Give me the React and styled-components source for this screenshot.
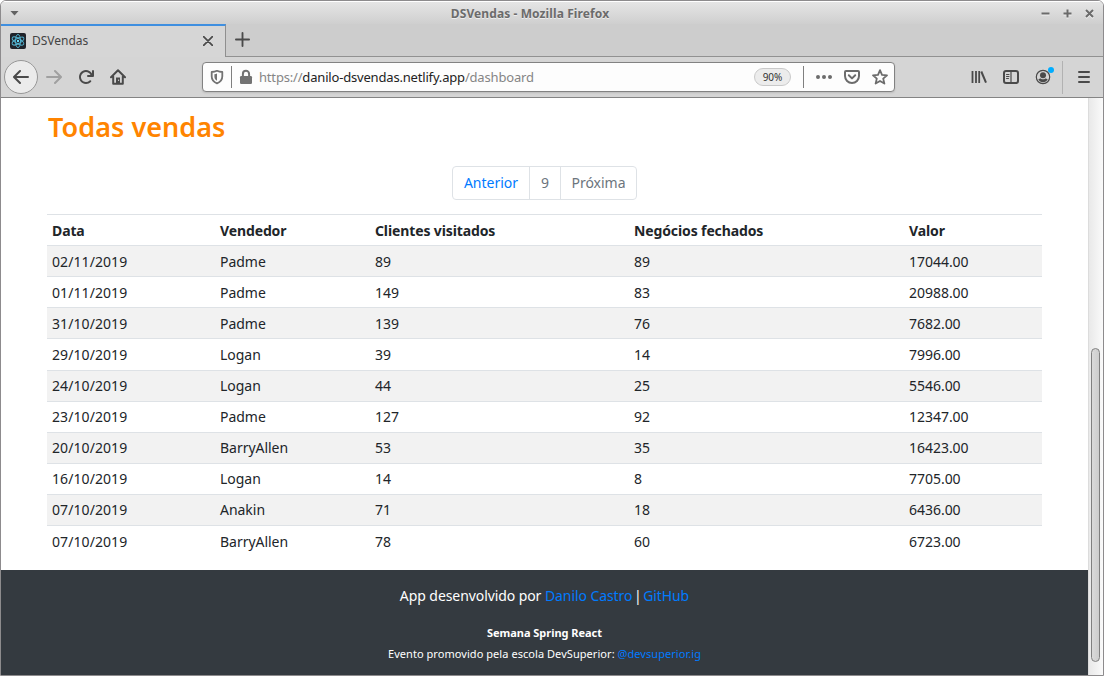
import React from "react";
import styled, { createGlobalStyle } from "styled-components";

const Global = createGlobalStyle`
  * { box-sizing: border-box; }
  body { margin: 0; background: #fff; overflow: hidden; }
`;

const Window = styled.div`
  width: 1104px;
  height: 676px;
  display: flex;
  flex-direction: column;
  border: 1px solid #8d8b8d;
  border-radius: 6px 6px 0 0;
  overflow: hidden;
  background: #fff;
  font-family: "Noto Sans", "Open Sans", sans-serif;
`;

/* ---------- Window frame ---------- */

const TitleBar = styled.header`
  flex: none;
  height: 23px;
  display: grid;
  grid-template-columns: 16px 1fr 60px;
  align-items: center;
  padding: 0 9px;
  border-top: 1px solid #fff;
  background: linear-gradient(#e5e5e5, #cfcfcf);
`;

const WindowMenu = styled.span`
  width: 9px;
  height: 5px;
  background: #626262;
  clip-path: polygon(0 0, 100% 0, 50% 100%);
`;

const WindowTitle = styled.h1`
  margin: 2px 0 0;
  text-align: center;
  font-size: 12px;
  line-height: 18px;
  font-weight: 700;
  letter-spacing: 0.1px;
  color: #6b6b6b;
  text-shadow: 0 1px 0 #eee;
`;

const WindowButtons = styled.div`
  display: flex;
  justify-content: flex-end;
  gap: 13px;
  padding-top: 1px;

  svg {
    width: 9px;
    height: 9px;
    stroke: #6b6b6b;
    stroke-width: 2;
    fill: none;
    filter: drop-shadow(0 1px 0 #f2f2f2);
  }
`;

const TabStrip = styled.div`
  flex: none;
  height: 33px;
  display: flex;
  background: #cdcdcd;
`;

const Tab = styled.div`
  width: 225px;
  display: flex;
  align-items: center;
  padding: 0 12px 1px 9px;
  border-top: 2px solid #3f8fe0;
  border-right: 1px solid #8f8f8f;
  background: #d6d6d6;
`;

const TabTitle = styled.span`
  flex: 1;
  padding-left: 6px;
  font-size: 12px;
  line-height: 18px;
  color: #444;
`;

const StripRest = styled.div`
  flex: 1;
  padding: 8px 0 0 9px;
  border-bottom: 1px solid #919191;
`;

const NavBar = styled.nav`
  flex: none;
  height: 41px;
  display: flex;
  align-items: center;
  padding: 0 11px 0 3px;
  border-bottom: 1px solid #848484;
  background: #d5d5d5;
`;

const BackButton = styled.span`
  width: 34px;
  height: 34px;
  display: grid;
  place-items: center;
  border: 1px solid #979797;
  border-radius: 50%;
  background: #ebebeb;
`;

const NavIcons = styled.div`
  width: 164px;
  display: flex;
  gap: 16px;
  padding-left: 8px;
`;

const UrlBar = styled.div`
  width: 693px;
  height: 30px;
  display: flex;
  align-items: center;
  padding: 0 6px;
  border: 1px solid #828282;
  border-radius: 4px;
  background: #fdfdfd;
  box-shadow: 0 1px 2px rgba(0, 0, 0, 0.12);
`;

const Divider = styled.span`
  flex: none;
  width: 1px;
  height: ${(p) => p.$height || 22}px;
  background: ${(p) => p.$color || "#7f7f7f"};
`;

const UrlText = styled.span`
  flex: 1;
  font-size: 13px;
  line-height: 20px;
  letter-spacing: -0.18px;
  color: #858585;

  strong { font-weight: 400; color: #222; }
`;

const ZoomBadge = styled.span`
  width: 37px;
  height: 18px;
  margin-right: 12px;
  border: 1px solid #c9c9c9;
  border-radius: 9px;
  background: #ececec;
  font-size: 10px;
  line-height: 16px;
  text-align: center;
  color: #333;
`;

const ShieldSlot = styled.span`
  display: flex;
  padding-right: 6px;
`;

const LockSlot = styled.span`
  display: flex;
  padding: 0 5px 0 6px;
`;

const UrlActions = styled.div`
  display: flex;
  gap: 12px;
  padding-left: 12px;
`;

const ToolIcons = styled.div`
  flex: 1;
  display: flex;
  align-items: center;
  justify-content: flex-end;
`;

const ToolSlot = styled.span`
  position: relative;
  display: flex;
  margin-right: ${(p) => p.$gap}px;
`;

const Notice = styled.i`
  position: absolute;
  top: -2px;
  left: 13px;
  width: 6px;
  height: 6px;
  border-radius: 50%;
  background: #00adff;
`;

const Icon = styled.svg.attrs({ viewBox: "0 0 16 16" })`
  display: block;
  width: ${(p) => p.$size || 16}px;
  height: ${(p) => p.$size || 16}px;
  fill: none;
  stroke: ${(p) => p.$color || "#4a4a4a"};
  stroke-width: 2;
  stroke-linecap: round;
  stroke-linejoin: round;
`;

const MenuIcon = styled(Icon)`
  margin-left: 13px;
`;

/* ---------- Page ---------- */

const Viewport = styled.div`
  flex: 1;
  display: flex;
  min-height: 0;
`;

const Page = styled.div`
  width: 1087px;
  display: flex;
  flex-direction: column;
`;

const Scrollbar = styled.div`
  flex: 1;
  padding: 250px 2px 0 2px;
  border-left: 1px solid #dcdcdc;
  background: linear-gradient(90deg, #e9e9e9, #fafafa);
`;

const Thumb = styled.div`
  width: 9px;
  height: 314px;
  border: 1px solid #808080;
  border-radius: 5px;
  background: linear-gradient(90deg, #dadada, #cdcdcd);
`;

const Main = styled.main`
  height: 472px;
  padding: 12px 46px 0;
`;

const Heading = styled.h2`
  margin: 0;
  padding-left: 1px;
  font-size: 27px;
  font-weight: 600;
  line-height: 34px;
  letter-spacing: 0.04px;
  color: #ff8400;
`;

const Pagination = styled.div`
  display: flex;
  width: 185px;
  height: 34px;
  margin: 22px auto 14px;
  border: 1px solid #dee2e6;
  border-radius: 4px;
`;

const PageItem = styled.span`
  width: ${(p) => p.$width}px;
  border-left: ${(p) => (p.$first ? "0" : "1px solid #dee2e6")};
  text-align: center;
  font-size: 14px;
  line-height: 32px;
  color: ${(p) => (p.$first ? "#007bff" : "#6c757d")};
`;

const Table = styled.div`
  display: flex;
  flex-direction: column;
`;

const Row = styled.div`
  display: grid;
  grid-template-columns: 168px 155px 259px 275px 1fr;
  height: ${(p) => (p.$tall ? 32 : 31)}px;
  padding-left: 5px;
  border-top: 1px solid #dee2e6;
  background: ${(p) => (p.$striped ? "#f2f2f2" : "#fff")};
  font-size: 14px;
  font-weight: ${(p) => (p.$head ? 700 : 400)};
  letter-spacing: ${(p) => (p.$head ? "-0.12px" : "-0.03px")};
  line-height: ${(p) => (p.$tight ? 29 : 31)}px;
  color: #212529;
`;

const DateCell = styled.span`
  letter-spacing: 0.08px;
`;

const Footer = styled.footer`
  flex: 1;
  padding-top: 15px;
  background: #343a40;
  color: #fff;
  text-align: center;
`;

const Link = styled.a`
  color: #007bff;
`;

const Separator = styled.span`
  word-spacing: -2px;
`;

const Credit = styled.p`
  margin: 0;
  font-size: 14px;
  line-height: 22px;
  letter-spacing: -0.08px;
`;

const EventName = styled.p`
  margin: 17px 0 4px;
  font-size: 11px;
  font-weight: 700;
  line-height: 17px;
  letter-spacing: -0.03px;
`;

const EventNote = styled.p`
  margin: 0;
  font-size: 11px;
  line-height: 17px;
  letter-spacing: 0.055px;
`;

const sales = [
  ["02/11/2019", "Padme", "89", "89", "17044.00"],
  ["01/11/2019", "Padme", "149", "83", "20988.00"],
  ["31/10/2019", "Padme", "139", "76", "7682.00"],
  ["29/10/2019", "Logan", "39", "14", "7996.00"],
  ["24/10/2019", "Logan", "44", "25", "5546.00"],
  ["23/10/2019", "Padme", "127", "92", "12347.00"],
  ["20/10/2019", "BarryAllen", "53", "35", "16423.00"],
  ["16/10/2019", "Logan", "14", "8", "7705.00"],
  ["07/10/2019", "Anakin", "71", "18", "6436.00"],
  ["07/10/2019", "BarryAllen", "78", "60", "6723.00"],
];

const ReactLogo = () => (
  <Icon>
    <rect width="16" height="16" rx="2" fill="#20232a" stroke="none" />
    <g stroke="#53b4d1" strokeWidth="0.9">
      <ellipse cx="8" cy="8" rx="2.6" ry="6.6" />
      <ellipse cx="8" cy="8" rx="2.6" ry="6.6" transform="rotate(60 8 8)" />
      <ellipse cx="8" cy="8" rx="2.6" ry="6.6" transform="rotate(120 8 8)" />
    </g>
    <circle cx="8" cy="8" r="1.2" fill="#61dafb" stroke="none" />
  </Icon>
);

export default function App() {
  return (
    <Window>
      <Global />
      <TitleBar>
        <WindowMenu />
        <WindowTitle>DSVendas - Mozilla Firefox</WindowTitle>
        <WindowButtons>
          <svg viewBox="0 0 9 9"><path d="M0.5 4.5h8" /></svg>
          <svg viewBox="0 0 9 9"><path d="M0.5 4.5h8M4.5 0.5v8" /></svg>
          <svg viewBox="0 0 9 9"><path d="M1 1l7 7M8 1l-7 7" /></svg>
        </WindowButtons>
      </TitleBar>

      <TabStrip>
        <Tab>
          <ReactLogo />
          <TabTitle>DSVendas</TabTitle>
          <Icon $size={10}>
            <path d="M1 1l14 14M15 1L1 15" strokeWidth="2.8" />
          </Icon>
        </Tab>
        <StripRest>
          <Icon $size={15}>
            <path d="M1 8h14M8 1v14" />
          </Icon>
        </StripRest>
      </TabStrip>

      <NavBar>
        <BackButton>
          <Icon><path d="M15 8H1.5M7 2L1 8l6 6" /></Icon>
        </BackButton>
        <NavIcons>
          <Icon $color="#a0a0a0"><path d="M1 8h13.5M9 2l6 6-6 6" /></Icon>
          <Icon>
            <path
              stroke="none"
              fill="#4a4a4a"
              d="M15 1a1 1 0 0 0-1 1v2.418A6.995 6.995 0 1 0 8 15a6.954 6.954 0 0 0 4.95-2.05 1 1 0 0 0-1.414-1.414A5.019 5.019 0 1 1 12.549 6H10a1 1 0 0 0 0 2h5a1 1 0 0 0 1-1V2a1 1 0 0 0-1-1z"
            />
          </Icon>
          <Icon>
            <path d="M1 8.2L8 1.2l7 7M3.2 7.5v7.3h9.6V7.5" />
            <path d="M6 14V8.5h4V14z" fill="#4a4a4a" stroke="none" />
            <path d="M8.6 11v.6" stroke="#d5d5d5" strokeWidth="1" />
          </Icon>
        </NavIcons>

        <UrlBar>
          <ShieldSlot>
            <Icon $color="#737373">
              <path d="M8 1.8C6.4 2.6 4.6 3 2.7 3v4.2c0 3.6 2.1 5.9 5.3 7.1 3.2-1.2 5.3-3.5 5.3-7.1V3c-1.9 0-3.7-.4-5.3-1.2z" strokeWidth="1.8" />
              <path d="M8 4.5c-.9.4-1.7.6-2.6.7v2.2c0 2.1.9 3.3 2.6 4.3z" fill="#737373" stroke="none" />
            </Icon>
          </ShieldSlot>
          <Divider />
          <LockSlot>
            <Icon $color="#737373">
              <path d="M4.9 8V4.9a3.1 3.1 0 0 1 6.2 0V8" />
              <rect x="2" y="7" width="12" height="8" rx="1.2" fill="#737373" stroke="none" />
            </Icon>
          </LockSlot>
          <UrlText>
            https://<strong>danilo-dsvendas.netlify.app</strong>/dashboard
          </UrlText>
          <ZoomBadge>90%</ZoomBadge>
          <Divider />
          <UrlActions>
            <Icon $color="#6c6c6c">
              <path d="M2 8h.01M8 8h.01M14 8h.01" strokeWidth="4" />
            </Icon>
            <Icon $color="#6c6c6c">
              <path d="M2 2h12a1 1 0 0 1 1 1v4a7 7 0 0 1-14 0V3a1 1 0 0 1 1-1z" />
              <path d="M4.8 6.3L8 9.4l3.2-3.1" />
            </Icon>
            <Icon $color="#6c6c6c">
              <path d="M8 1.2l2 4.6 5 .5-3.8 3.3 1.2 5L8 12l-4.4 2.6 1.2-5L1 6.3l5-.5z" strokeWidth="1.8" />
            </Icon>
          </UrlActions>
        </UrlBar>

        <ToolIcons>
          <ToolSlot $gap={16}>
            <Icon>
              <path d="M1.5 2v12M5 2v12M8.2 2v12" strokeWidth="1.8" strokeLinecap="butt" />
              <path d="M10.3 2.5l4.7 11.2" strokeLinecap="butt" />
            </Icon>
          </ToolSlot>
          <ToolSlot $gap={16}>
            <Icon>
              <rect x="1" y="2" width="14" height="12" rx="2" />
              <path d="M8 2v12" strokeWidth="1.2" />
              <path d="M3.5 5.5h2.5M3.5 7.5h2.5M3.5 9.5h2" strokeWidth="1" />
            </Icon>
          </ToolSlot>
          <ToolSlot $gap={11}>
            <Icon>
              <circle cx="8" cy="8" r="6.7" strokeWidth="1.2" />
              <circle cx="8" cy="6.2" r="3" fill="#4a4a4a" stroke="none" />
              <path d="M3.3 10.2c1-.7 1.6-.8 2.5-.8.6.6 1.4.9 2.2.9s1.6-.3 2.2-.9c.9 0 1.5.1 2.5.8-.9 1.9-2.6 3-4.7 3s-3.8-1.1-4.7-3z" fill="#4a4a4a" stroke="none" />
            </Icon>
            <Notice />
          </ToolSlot>
          <Divider $height={33} $color="#b2b2b2" />
          <ToolSlot $gap={0}>
            <MenuIcon>
              <path d="M3 3h10M3 8h10M3 13h10" />
            </MenuIcon>
          </ToolSlot>
        </ToolIcons>
      </NavBar>

      <Viewport>
        <Page>
          <Main>
            <Heading>Todas vendas</Heading>
            <Pagination>
              <PageItem $first $width={76}>Anterior</PageItem>
              <PageItem $width={31}>9</PageItem>
              <PageItem $width={76}>Próxima</PageItem>
            </Pagination>
            <Table>
              <Row $head>
                <span>Data</span>
                <span>Vendedor</span>
                <span>Clientes visitados</span>
                <span>Negócios fechados</span>
                <span>Valor</span>
              </Row>
              {sales.map(([date, seller, visited, deals, amount], i) => (
                <Row
                  key={i}
                  $striped={i % 2 === 0}
                  $tall={i === 3}
                  $tight={i >= 4 && i < sales.length - 1}
                >
                  <DateCell>{date}</DateCell>
                  <span>{seller}</span>
                  <span>{visited}</span>
                  <span>{deals}</span>
                  <span>{amount}</span>
                </Row>
              ))}
            </Table>
          </Main>
          <Footer>
            <Credit>
              App desenvolvido por <Link>Danilo Castro</Link>
              <Separator> | </Separator>
              <Link>GitHub</Link>
            </Credit>
            <EventName>Semana Spring React</EventName>
            <EventNote>
              Evento promovido pela escola DevSuperior: <Link>@devsuperior.ig</Link>
            </EventNote>
          </Footer>
        </Page>
        <Scrollbar>
          <Thumb />
        </Scrollbar>
      </Viewport>
    </Window>
  );
}
